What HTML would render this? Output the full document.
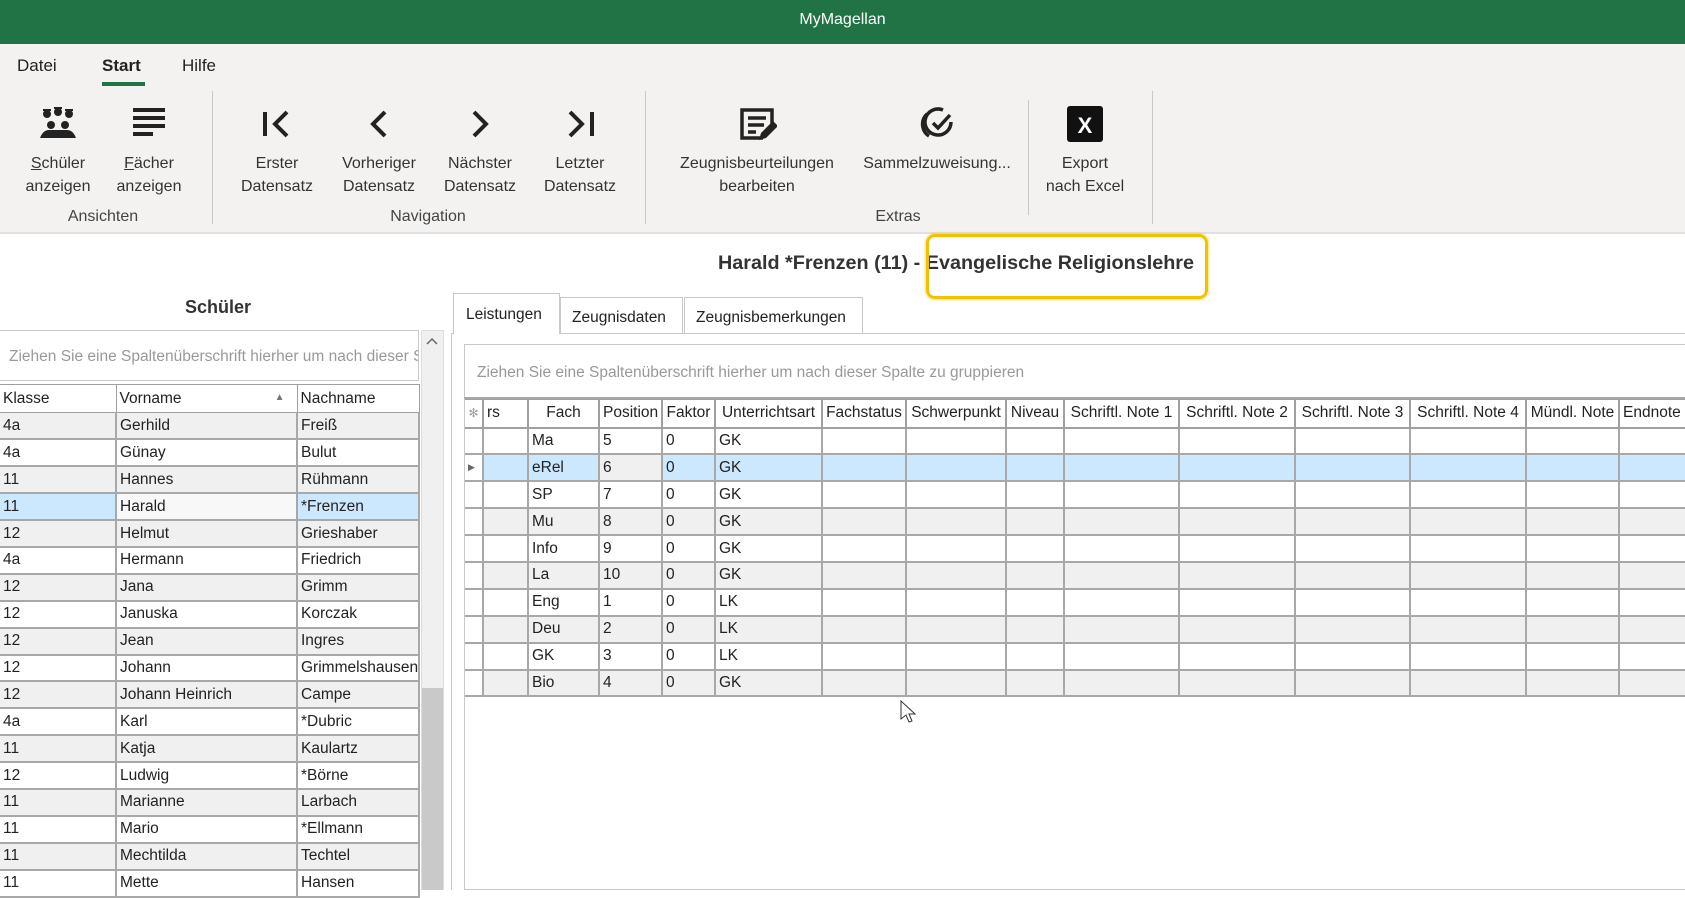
<!DOCTYPE html>
<html><head><meta charset="utf-8">
<style>
*{margin:0;padding:0;box-sizing:border-box}
body{width:1685px;height:890px;overflow:hidden;background:#fff;font-family:"Liberation Sans",sans-serif;color:#222;position:relative}
.a{position:absolute}
.title{left:0;top:0;width:1685px;height:44px;background:#217346;color:#fff;font-size:16px;text-align:center;line-height:40px}
.ribbon{left:0;top:44px;width:1685px;height:190px;background:#f3f2f1;border-bottom:2px solid #e1e1e1}
.tab{font-size:17px;top:56px}
.btn{width:120px;text-align:center;font-size:16px;line-height:23px;top:152px;color:#333}
.ico{top:104px;width:40px;height:40px}
.glab{font-size:16px;top:208px;text-align:center;width:140px;color:#444}
.sep{width:1px;background:#c8c8c8;top:91px;height:133px}
table{border-collapse:collapse;table-layout:fixed;font-size:15.5px}
td{border:1px solid #9a9a9a;height:26.9px;padding:0 3px;white-space:nowrap;overflow:hidden}
.lg td{border-left:none;border-top:none;border-right:2px solid #a8a8a8;border-bottom:2px solid #a8a8a8}
.lg tr:nth-child(even) td{background:#f0f0f0}
.lg th,.rg th{font-weight:normal;text-align:left;padding:0 3px;height:28px;border:1px solid #a0a0a0;background:#fff;white-space:nowrap;overflow:hidden}
.rg td{border:2px solid #a8a8a8;border-width:0 2px 2px 0}
.rg tr:nth-child(odd) td{background:#f0f0f0}
.rg td.w{background:#fff!important}
.rg th{text-align:center;border-width:1px 2px 2px 0}
.sel td{background:#cce8ff!important}
</style></head><body>
<div class="a title">MyMagellan</div>
<div class="a ribbon"></div>
<div class="a tab" style="left:17px">Datei</div>
<div class="a tab" style="left:102px;font-weight:bold">Start</div>
<div class="a" style="left:102px;top:82px;width:43px;height:4px;background:#217346"></div>
<div class="a tab" style="left:182px">Hilfe</div>

<svg class="a ico" style="left:38px" viewBox="0 0 40 40"><g fill="#222"><circle cx="9" cy="10" r="4"/><circle cx="20" cy="8" r="4"/><circle cx="31" cy="10" r="4"/><circle cx="13" cy="21" r="4"/><circle cx="27" cy="21" r="4"/><path d="M2 34q3-8 9-8h18q6 0 9 8z"/><rect x="5" y="5" width="8" height="2"/><rect x="16" y="3" width="8" height="2"/><rect x="27" y="5" width="8" height="2"/></g></svg>
<svg class="a ico" style="left:129px" viewBox="0 0 40 40"><g fill="#222"><rect x="4" y="4" width="32" height="4"/><rect x="4" y="12" width="32" height="4"/><rect x="4" y="20" width="32" height="4"/><rect x="4" y="28" width="20" height="4"/></g></svg>
<svg class="a ico" style="left:257px" viewBox="0 0 40 40"><g stroke="#222" stroke-width="4" fill="none"><path d="M8 8v24"/><path d="M30 8L18 20l12 12"/></g></svg>
<svg class="a ico" style="left:359px" viewBox="0 0 40 40"><path d="M26 8L14 20l12 12" stroke="#222" stroke-width="4" fill="none"/></svg>
<svg class="a ico" style="left:460px" viewBox="0 0 40 40"><path d="M14 8l12 12-12 12" stroke="#222" stroke-width="4" fill="none"/></svg>
<svg class="a ico" style="left:560px" viewBox="0 0 40 40"><g stroke="#222" stroke-width="4" fill="none"><path d="M32 8v24"/><path d="M10 8l12 12-12 12"/></g></svg>
<svg class="a ico" style="left:737px" viewBox="0 0 40 40"><g stroke="#222" stroke-width="3.5" fill="none"><path d="M26 34H5V6h30v14"/><path d="M11 14h18M11 21h16M11 28h8"/></g><path d="M22 36l2-7 12-12 5 5-12 12z" fill="#222"/></svg>
<svg class="a ico" style="left:917px" viewBox="0 0 40 40"><g stroke="#222" stroke-width="3.5" fill="none"><path d="M34 18a13 13 0 1 1-8-12"/><path d="M16 19l5 5 12-13"/><path d="M12 32a14 14 0 0 1-2-22"/></g></svg>
<svg class="a ico" style="left:1065px" viewBox="0 0 40 40"><rect x="2" y="2" width="36" height="36" rx="3" fill="#111"/><text x="20" y="29" fill="#fff" font-size="22" font-weight="bold" text-anchor="middle" font-family="Liberation Sans">X</text></svg>

<div class="a btn" style="left:-2px"><u>S</u>chüler<br>anzeigen</div>
<div class="a btn" style="left:89px"><u>F</u>ächer<br>anzeigen</div>
<div class="a btn" style="left:217px">Erster<br>Datensatz</div>
<div class="a btn" style="left:319px">Vorheriger<br>Datensatz</div>
<div class="a btn" style="left:420px">Nächster<br>Datensatz</div>
<div class="a btn" style="left:520px">Letzter<br>Datensatz</div>
<div class="a btn" style="left:657px;width:200px">Zeugnisbeurteilungen<br>bearbeiten</div>
<div class="a btn" style="left:852px;width:170px">Sammelzuweisung...</div>
<div class="a btn" style="left:1025px">Export<br>nach Excel</div>
<div class="a glab" style="left:33px">Ansichten</div>
<div class="a glab" style="left:358px">Navigation</div>
<div class="a glab" style="left:828px">Extras</div>
<div class="a sep" style="left:212px"></div>
<div class="a sep" style="left:645px"></div>
<div class="a sep" style="left:1028px;top:100px;height:115px"></div>
<div class="a sep" style="left:1152px"></div>

<div class="a" style="left:718px;top:252px;font-size:19.8px;font-weight:bold;color:#333;white-space:nowrap">Harald *Frenzen (11) - Evangelische Religionslehre</div>
<div class="a" style="left:926px;top:234px;width:282px;height:65px;border:3px solid #f2c200;border-radius:9px;box-shadow:0 0 3px #f2c200"></div>

<div class="a" style="left:185px;top:297px;font-size:18px;font-weight:bold;color:#333">Schüler</div>
<div class="a" style="left:0;top:330px;width:419px;height:51px;border:1px solid #c8c8c8;border-left:none;color:#999;font-size:15.5px;padding:17px 0 0 9px;white-space:nowrap;overflow:hidden">Ziehen Sie eine Spaltenüberschrift hierher um nach dieser Spalte zu gruppieren</div>
<div class="a" style="left:421px;top:330px;width:23px;height:560px;background:#f0f0f0;border:1px solid #ddd"></div>
<div class="a" style="left:422px;top:688px;width:21px;height:202px;background:#c9c9c9"></div>
<svg class="a" style="left:425px;top:336px" width="14" height="10"><path d="M2 8l5-5 5 5" stroke="#666" stroke-width="1.5" fill="none"/></svg>
<table class="a lg" style="left:0;top:384px;width:419px">
<colgroup><col style="width:116px"><col style="width:181px"><col style="width:122px"></colgroup>
<tr><th style="border-left:none">Klasse</th><th style="position:relative">Vorname<span style="position:absolute;right:12px;top:7px;font-size:10px;color:#777">▲</span></th><th>Nachname</th></tr>
<tr><td>4a</td><td>Gerhild</td><td>Freiß</td></tr>
<tr><td>4a</td><td>Günay</td><td>Bulut</td></tr>
<tr><td>11</td><td>Hannes</td><td>Rühmann</td></tr>
<tr class="sel"><td>11</td><td style="background:#f8f8f8!important">Harald</td><td>*Frenzen</td></tr>
<tr><td>12</td><td>Helmut</td><td>Grieshaber</td></tr>
<tr><td>4a</td><td>Hermann</td><td>Friedrich</td></tr>
<tr><td>12</td><td>Jana</td><td>Grimm</td></tr>
<tr><td>12</td><td>Januska</td><td>Korczak</td></tr>
<tr><td>12</td><td>Jean</td><td>Ingres</td></tr>
<tr><td>12</td><td>Johann</td><td>Grimmelshausen</td></tr>
<tr><td>12</td><td>Johann Heinrich</td><td>Campe</td></tr>
<tr><td>4a</td><td>Karl</td><td>*Dubric</td></tr>
<tr><td>11</td><td>Katja</td><td>Kaulartz</td></tr>
<tr><td>12</td><td>Ludwig</td><td>*Börne</td></tr>
<tr><td>11</td><td>Marianne</td><td>Larbach</td></tr>
<tr><td>11</td><td>Mario</td><td>*Ellmann</td></tr>
<tr><td>11</td><td>Mechtilda</td><td>Techtel</td></tr>
<tr><td>11</td><td>Mette</td><td>Hansen</td></tr>
</table>

<div class="a" style="left:451px;top:333px;width:1234px;height:557px;border-left:1px solid #c8c8c8;border-top:1px solid #c8c8c8"></div>
<div class="a" style="left:453px;top:293px;width:107px;height:41px;background:#fff;border:1px solid #c8c8c8;border-bottom:none;font-size:15.5px;padding:12px 0 0 12px">Leistungen</div>
<div class="a" style="left:560px;top:297px;width:123px;height:36px;background:#fff;border:1px solid #c8c8c8;border-bottom:none;font-size:15.5px;padding:11px 0 0 11px">Zeugnisdaten</div>
<div class="a" style="left:684px;top:297px;width:179px;height:36px;background:#fff;border:1px solid #c8c8c8;border-bottom:none;font-size:15.5px;padding:11px 0 0 11px">Zeugnisbemerkungen</div>
<div class="a" style="left:464px;top:344px;width:1221px;height:546px;border:1px solid #c8c8c8;border-right:none"></div>
<div class="a" style="left:477px;top:364px;font-size:15.5px;color:#999">Ziehen Sie eine Spaltenüberschrift hierher um nach dieser Spalte zu gruppieren</div>
<div class="a" style="left:464px;top:397px;width:1221px;height:2px;background:#a8a8a8"></div>
<table class="a rg" style="left:465px;top:399px;width:1300px">
<colgroup><col style="width:18px"><col style="width:45px"><col style="width:71px"><col style="width:63px"><col style="width:53px"><col style="width:107px"><col style="width:84px"><col style="width:100px"><col style="width:58px"><col style="width:115px"><col style="width:116px"><col style="width:115px"><col style="width:116px"><col style="width:93px"><col style="width:146px"></colgroup>
<tr><th style="color:#999;font-size:12px;padding:0">✻</th><th style="text-align:left">rs</th><th>Fach</th><th>Position</th><th>Faktor</th><th>Unterrichtsart</th><th>Fachstatus</th><th>Schwerpunkt</th><th>Niveau</th><th>Schriftl. Note 1</th><th>Schriftl. Note 2</th><th>Schriftl. Note 3</th><th>Schriftl. Note 4</th><th>Mündl. Note</th><th style="text-align:left">Endnote</th></tr>
<tr><td class="w"></td><td></td><td>Ma</td><td>5</td><td>0</td><td>GK</td><td></td><td></td><td></td><td></td><td></td><td></td><td></td><td></td><td></td></tr>
<tr class="sel"><td class="w" style="font-size:9px;color:#666">▶</td><td></td><td>eRel</td><td style="background:#f0f0f0!important">6</td><td>0</td><td>GK</td><td></td><td></td><td></td><td></td><td></td><td></td><td></td><td></td><td></td></tr>
<tr><td class="w"></td><td></td><td>SP</td><td>7</td><td>0</td><td>GK</td><td></td><td></td><td></td><td></td><td></td><td></td><td></td><td></td><td></td></tr>
<tr><td class="w"></td><td></td><td>Mu</td><td>8</td><td>0</td><td>GK</td><td></td><td></td><td></td><td></td><td></td><td></td><td></td><td></td><td></td></tr>
<tr><td class="w"></td><td></td><td>Info</td><td>9</td><td>0</td><td>GK</td><td></td><td></td><td></td><td></td><td></td><td></td><td></td><td></td><td></td></tr>
<tr><td class="w"></td><td></td><td>La</td><td>10</td><td>0</td><td>GK</td><td></td><td></td><td></td><td></td><td></td><td></td><td></td><td></td><td></td></tr>
<tr><td class="w"></td><td></td><td>Eng</td><td>1</td><td>0</td><td>LK</td><td></td><td></td><td></td><td></td><td></td><td></td><td></td><td></td><td></td></tr>
<tr><td class="w"></td><td></td><td>Deu</td><td>2</td><td>0</td><td>LK</td><td></td><td></td><td></td><td></td><td></td><td></td><td></td><td></td><td></td></tr>
<tr><td class="w"></td><td></td><td>GK</td><td>3</td><td>0</td><td>LK</td><td></td><td></td><td></td><td></td><td></td><td></td><td></td><td></td><td></td></tr>
<tr><td class="w"></td><td></td><td>Bio</td><td>4</td><td>0</td><td>GK</td><td></td><td></td><td></td><td></td><td></td><td></td><td></td><td></td><td></td></tr>
</table>
<svg class="a" style="left:900px;top:700px" width="16" height="24"><path d="M1 1v18l5-4 3 7 3-1-3-7h6z" fill="#fff" stroke="#333" stroke-width="1"/></svg>
</body></html>
